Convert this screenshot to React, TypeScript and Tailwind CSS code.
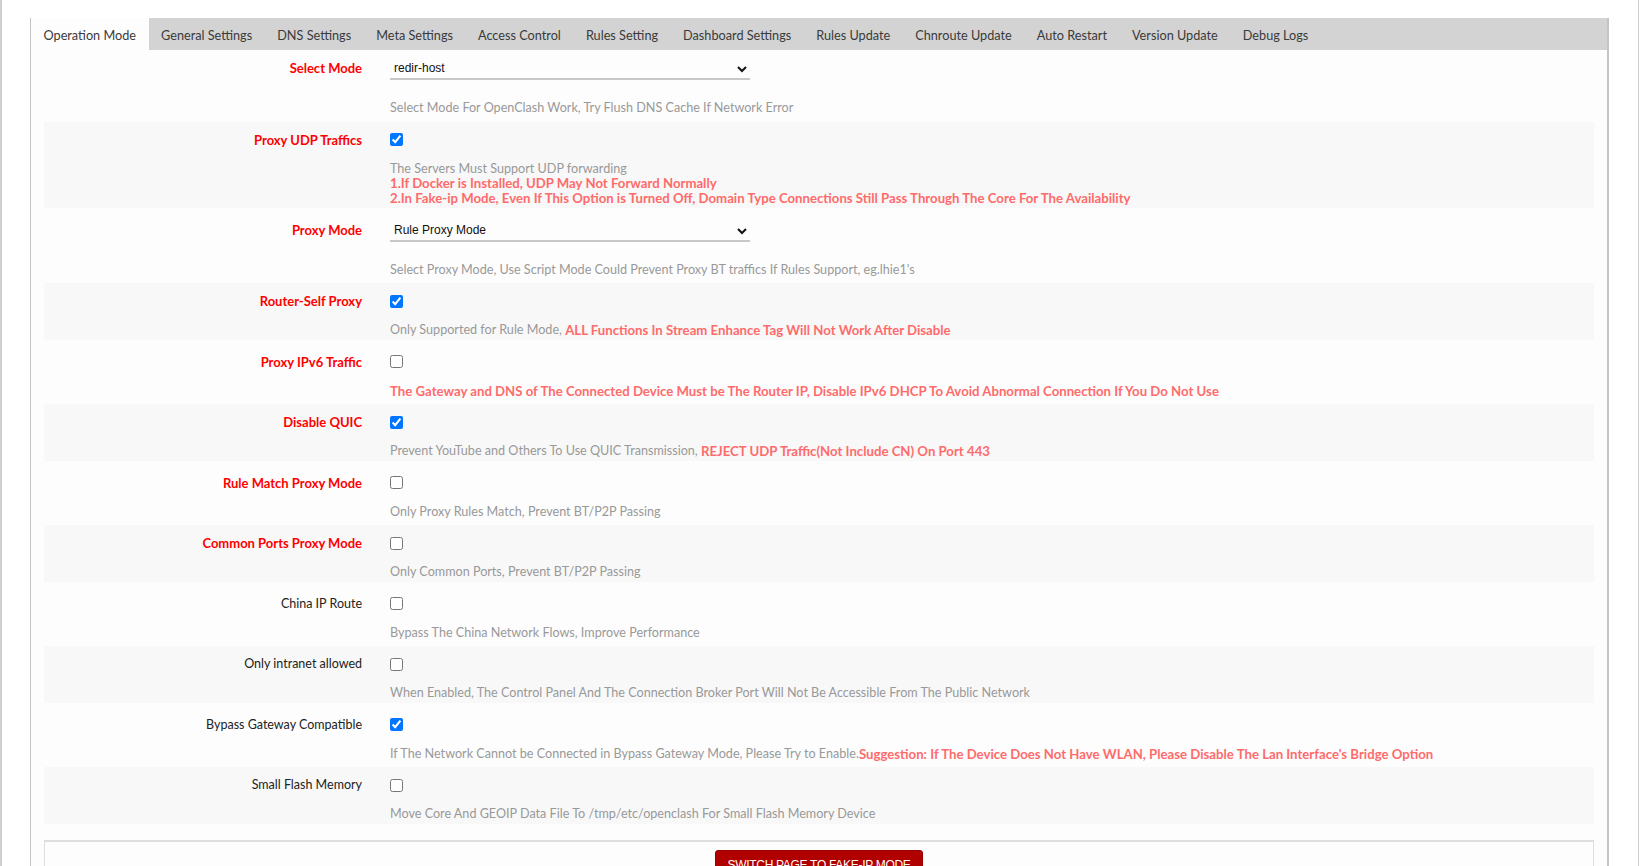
import React from 'react'

type Row = {
    label: string;
    red?: boolean;
    kind: 'select' | 'check';
    value?: string;
    options?: string[];
    checked?: boolean;
    desc: React.ReactNode;
}

const tabs = [
    'Operation Mode', 'General Settings', 'DNS Settings', 'Meta Settings', 'Access Control', 'Rules Setting',
    'Dashboard Settings', 'Rules Update', 'Chnroute Update', 'Auto Restart', 'Version Update', 'Debug Logs',
]

const Warn = ({ children }: { children: React.ReactNode }) => (
    <span className="inline-block align-top font-bold text-[13.2px] leading-[14.75px] text-[#ff6b6b]">{children}</span>
)

const rows: Row[] = [
    {
        label: 'Select Mode', red: true, kind: 'select', value: 'redir-host',
        options: ['redir-host', 'fake-ip', 'redir-host-tun', 'fake-ip-tun', 'redir-host-mix', 'fake-ip-mix'],
        desc: 'Select Mode For OpenClash Work, Try Flush DNS Cache If Network Error',
    },
    {
        label: 'Proxy UDP Traffics', red: true, kind: 'check', checked: true,
        desc: (
            <>
                The Servers Must Support UDP forwarding<br />
                <Warn>1.If Docker is Installed, UDP May Not Forward Normally</Warn><br />
                <Warn>2.In Fake-ip Mode, Even If This Option is Turned Off, Domain Type Connections Still Pass Through The Core For The Availability</Warn>
            </>
        ),
    },
    {
        label: 'Proxy Mode', red: true, kind: 'select', value: 'Rule Proxy Mode',
        options: ['Rule Proxy Mode', 'Global Proxy Mode', 'Direct Proxy Mode', 'Script Proxy Mode'],
        desc: "Select Proxy Mode, Use Script Mode Could Prevent Proxy BT traffics If Rules Support, eg.lhie1's",
    },
    {
        label: 'Router-Self Proxy', red: true, kind: 'check', checked: true,
        desc: <>Only Supported for Rule Mode, <Warn>ALL Functions In Stream Enhance Tag Will Not Work After Disable</Warn></>,
    },
    {
        label: 'Proxy IPv6 Traffic', red: true, kind: 'check',
        desc: <Warn>The Gateway and DNS of The Connected Device Must be The Router IP, Disable IPv6 DHCP To Avoid Abnormal Connection If You Do Not Use</Warn>,
    },
    {
        label: 'Disable QUIC', red: true, kind: 'check', checked: true,
        desc: <>Prevent YouTube and Others To Use QUIC Transmission, <Warn>REJECT UDP Traffic(Not Include CN) On Port 443</Warn></>,
    },
    { label: 'Rule Match Proxy Mode', red: true, kind: 'check', desc: 'Only Proxy Rules Match, Prevent BT/P2P Passing' },
    { label: 'Common Ports Proxy Mode', red: true, kind: 'check', desc: 'Only Common Ports, Prevent BT/P2P Passing' },
    { label: 'China IP Route', kind: 'check', desc: 'Bypass The China Network Flows, Improve Performance' },
    {
        label: 'Only intranet allowed', kind: 'check',
        desc: 'When Enabled, The Control Panel And The Connection Broker Port Will Not Be Accessible From The Public Network',
    },
    {
        label: 'Bypass Gateway Compatible', kind: 'check', checked: true,
        desc: <>If The Network Cannot be Connected in Bypass Gateway Mode, Please Try to Enable.<Warn>Suggestion: If The Device Does Not Have WLAN, Please Disable The Lan Interface's Bridge Option</Warn></>,
    },
    { label: 'Small Flash Memory', kind: 'check', desc: 'Move Core And GEOIP Data File To /tmp/etc/openclash For Small Flash Memory Device' },
]

function SettingRow({ row, striped }: { row: Row; striped: boolean }) {
    return (
        <div className={`grid grid-cols-[318px_1fr] gap-x-[28px] pt-[8px] pb-[2px] ${striped ? 'bg-[#f8f8f8]' : ''}`}>
            <label className={`text-right leading-[20px] ${row.red ? 'font-bold text-[13px] text-[#ff0000]' : 'text-[12.5px] text-[#222]'}`}>
                {row.label}
            </label>
            <div>
                {row.kind === 'select' ? (
                    <select
                        defaultValue={row.value}
                        className="block w-[360px] h-[22px] border-b-2 border-[#c8c8c8] text-[12px] text-[#111] outline-none"
                        style={{ fontFamily: '"Liberation Sans", Arial, sans-serif' }}
                    >
                        {row.options?.map((o) => <option key={o} value={o}>{o}</option>)}
                    </select>
                ) : (
                    <div className="h-[20px] flex items-center">
                        <input type="checkbox" defaultChecked={row.checked} className="w-[13px] h-[13px]" />
                    </div>
                )}
                <p className={`${row.kind === 'select' ? 'mt-[21px]' : 'mt-[12px]'} text-[12.6px] leading-[14.75px] text-[#999]`}>
                    {row.desc}
                </p>
            </div>
        </div>
    )
}

export default function App() {
    return (
        <div className="w-full h-[866px] overflow-hidden bg-white font-['Lato',sans-serif]">
            <div className="w-[1639px] h-full border-l-2 border-r border-[#cfcfcf] pt-[18px]">
                <section className="ml-[28px] w-[1579px] h-full border-l border-r-2 border-[#c4c4c4] bg-[#fdfdfd]">
                    {/* tabs */}
                    <ul className="flex h-[32px] bg-[#d3d3d3]">
                        {tabs.map((t, i) => (
                            <li
                                key={t}
                                className={`px-[12.5px] pt-[3px] flex items-center text-[12.7px] text-[#3a3a3a] cursor-pointer ${i === 0 ? 'bg-[#fdfdfd]' : ''}`}
                            >
                                {t}
                            </li>
                        ))}
                    </ul>

                    <div className="px-[13px]">
                        <div className="flex flex-col gap-[3.75px]">
                            {rows.map((r, i) => (
                                <SettingRow key={r.label} row={r} striped={i % 2 === 1} />
                            ))}
                        </div>

                        {/* page actions */}
                        <div className="mt-[16px] border-t-2 border-x border-[#dedede] pt-[8px] flex justify-center">
                            <button
                                type="button"
                                className="h-[30px] px-[11px] rounded-[3px] bg-[#b00000] border border-[#960000] text-white text-[12px] uppercase tracking-[-0.3px]"
                                style={{ fontFamily: '"Liberation Sans", Arial, sans-serif' }}
                            >
                                Switch Page to Fake-IP Mode
                            </button>
                        </div>
                    </div>
                </section>
            </div>
        </div>
    )
}
